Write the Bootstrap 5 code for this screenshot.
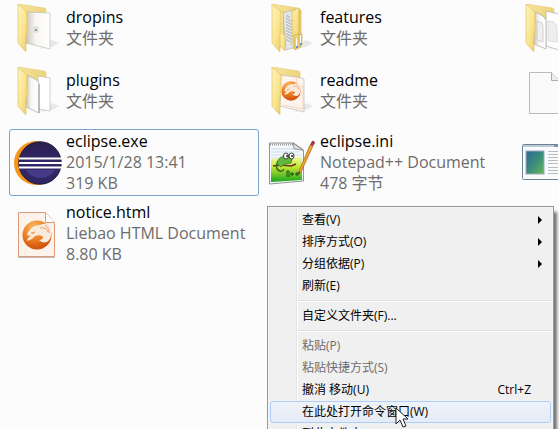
<!DOCTYPE html>
<html lang="zh-CN">
<head>
<meta charset="utf-8">
<meta name="viewport" content="width=device-width, initial-scale=1">
<title>eclipse</title>
<link href="https://cdn.jsdelivr.net/npm/bootstrap@5.3.0/dist/css/bootstrap.min.css" rel="stylesheet">
<style>
body{background:#fcfcfc;color:#000;font-family:"Open Sans","Noto Sans CJK SC",sans-serif;font-size:16px;line-height:21px;height:100vh;overflow:hidden}
.files{display:grid;grid-template-columns:250px 250px minmax(0,250px);column-gap:4px;align-items:start;padding-left:9px;overflow:hidden}
.file{height:56px;margin-bottom:7px;gap:1px;padding-left:4px;border:1px solid transparent;border-radius:3px;white-space:nowrap;overflow:hidden}
.file.tall{height:67px;margin:3px 0 1px}
.file.focused{border-color:#7da2ce}
.file svg{width:48px;height:48px;flex:none}
.file .labels{padding-left:3px}
.meta{color:#6d6d6d}
.ctx{left:267px;top:206px;width:287px;background:#f0f0f0 linear-gradient(90deg,transparent 28px,#e2e3e3 28px,#e2e3e3 29px,#fff 29px,#fff 30px,transparent 30px);border:1px solid #979797;padding:2px;box-shadow:inset 0 0 0 1px #f5f5f5,4px 5px 3px -1px rgba(0,0,0,.55);font-size:12px;line-height:20px}
.entry{display:flex;justify-content:space-between;align-items:center;width:100%;height:22px;padding:0 19px 0 31px;border:1px solid transparent;border-radius:3px;background:none;color:#000;text-align:left;white-space:nowrap}
.entry:disabled{color:#6d6d6d}
.entry.sub{padding-right:8px}
.entry.hot{border-color:#aecff7;background:linear-gradient(#eff3f9,#e4ebf6)}
.rule{margin:3px 0 3px 28px;height:2px;border-top:1px solid #e0e0e0;background:#fff}
.pointer{left:395px;top:407px;width:13px;height:21px;z-index:5}
</style>
</head>
<body>
<svg class="position-absolute" width="0" height="0" aria-hidden="true">
<defs>
<linearGradient id="back" x2="1" y2="1"><stop stop-color="#f6e59f"/><stop offset="1" stop-color="#e8c75f"/></linearGradient>
<linearGradient id="front" x2="1" y2="1"><stop stop-color="#fdf2bd"/><stop offset=".5" stop-color="#fbe794"/><stop offset="1" stop-color="#edcd6b"/></linearGradient>
<linearGradient id="sheet" x2="1" y2="0"><stop stop-color="#cfc5b4"/><stop offset=".4" stop-color="#f7f6f4"/><stop offset="1" stop-color="#fff"/></linearGradient>
<radialGradient id="ball" cx=".4" cy=".25" r=".8"><stop stop-color="#fbc069"/><stop offset=".5" stop-color="#ee7f22"/><stop offset="1" stop-color="#c94a08"/></radialGradient>
<linearGradient id="green" x2="0" y2="1"><stop stop-color="#f4f7a0"/><stop offset=".4" stop-color="#c5e532"/><stop offset="1" stop-color="#17a51c"/></linearGradient>
<linearGradient id="teal" x2="1" y2="1"><stop stop-color="#2d6796"/><stop offset=".5" stop-color="#398c7d"/><stop offset="1" stop-color="#68b957"/></linearGradient>
<linearGradient id="night" x2="0" y2="1"><stop stop-color="#2b1f50"/><stop offset=".6" stop-color="#33286a"/><stop offset="1" stop-color="#2f2560"/></linearGradient>
</defs>
<symbol id="leopard" viewBox="0 0 30 30"><circle cx="15" cy="15" r="14.500" fill="url(#ball)"/><path d="M5 15C7 9 12 5 18 5c4-2 8-2 10 2 3 6 1 12-3 15-3 1-6 0-8-2 2 0 4-1 4-3-2-2-5-2-8-1l-3 3-5 2 1-3 3-2z" fill="#f9eadc"/><path d="M9 13l4-1-2 2zM18 8c4-1 7 1 8 4M23 5c3 2 4 5 4 8" fill="none" stroke="#e7a56e"/></symbol>
<symbol id="folderback" viewBox="0 0 48 48"><path d="M26 45l12-2 7-4-7-3z" fill="#000" opacity=".08"/><path d="M4 0l26 4q2 0 2 2v34l-20-1z" fill="url(#back)" stroke="#e5cd7d" stroke-width=".7"/></symbol>
<symbol id="folderfront" viewBox="0 0 48 48"><path d="M4 0l9 8v21l-1 2v16q0 1-1 0L4 39z" fill="url(#front)" stroke="#dfc468" stroke-width=".7"/></symbol>
</svg>

<main class="files">
<div class="file d-flex align-items-center">
<svg viewBox="0 0 48 48"><use href="#folderback"/><path d="M13 8l23 1v36l-24-6z" fill="url(#sheet)" stroke="#bbb" stroke-width=".7"/><rect x="20" y="23" width="4" height="5" fill="#eee" stroke="#bbb" stroke-width=".5"/><path d="M21 25h2v2h-2z" fill="#999"/><use href="#folderfront"/></svg>
<div class="labels"><div>dropins</div><div class="meta">文件夹</div></div></div>
<div class="file d-flex align-items-center">
<svg viewBox="0 0 48 48"><use href="#folderback"/><path d="M15 9l13-4v38l-10 3z" fill="#e4e7e8" stroke="#aaa" stroke-width=".6"/><path d="M19 11v26m2-25v27m2-23v25" stroke="#999" stroke-width=".8" stroke-dasharray="2 1"/><path d="M10 6l5 3v21l2 2v15l-5-5zM24 7l7-3v38l-6 3z" fill="url(#front)" stroke="#d6b958" stroke-width=".6"/><path d="M26 31l5-1V7l2-1v37l-6 3zM31 30h3v11l-3 1z" fill="#efd16e" stroke="#caa84a" stroke-width=".6"/><path d="M28 34h1v9h-1zM32 31h1v9h-1z" fill="#fff"/><path d="M28 42h2v2h-2zM32 39h2v2h-2z" fill="#4d9de0"/><use href="#folderfront"/></svg>
<div class="labels"><div>features</div><div class="meta">文件夹</div></div></div>
<div class="file d-flex align-items-center">
<svg viewBox="0 0 48 48"><use href="#folderback"/><path d="M24 7l13 3v36l-13-4z" fill="#fff" stroke="#aaa" stroke-width=".7"/><path d="M26 17l6 1 3 4v16l-9-1z" fill="#eee" stroke="#ccc" stroke-width=".6"/><path d="M13 8l8 4 3 4v29l-12-5z" fill="url(#sheet)" stroke="#aaa" stroke-width=".7"/><path d="M15 17l5 2 1 4v15l-6-2z" fill="#eee" stroke="#bbb" stroke-width=".6"/><use href="#folderfront"/></svg>
</div>

<div class="file d-flex align-items-center">
<svg viewBox="0 0 48 48"><use href="#folderback"/><path d="M24 9l12 2v33l-12-2z" fill="#fff" stroke="#bbb" stroke-width=".7"/><path d="M13 8l8 4q4 2 4 5v29l-13-6z" fill="url(#sheet)" stroke="#aaa" stroke-width=".7"/><path d="M25 17v29" stroke="#999"/><use href="#folderfront"/></svg>
<div class="labels"><div>plugins</div><div class="meta">文件夹</div></div></div>
<div class="file d-flex align-items-center">
<svg viewBox="0 0 48 48"><use href="#folderback"/><path d="M13 8l16 2 7 2v33l-24-6z" fill="#fdf4ee" stroke="#bbb" stroke-width=".7"/><path d="M28 10l1 8 6 2M35 20v22l-20-4" fill="none" stroke="#f0c7a8" stroke-width=".7"/><use href="#leopard" x="13" y="14" width="20" height="20"/><use href="#folderfront"/></svg>
<div class="labels"><div>readme</div><div class="meta">文件夹</div></div></div>
<div class="file d-flex align-items-center">
<svg viewBox="0 0 48 48"><path d="M7.500 5.500h22l8 8v33h-30z" fill="#fafafa" stroke="#bbb"/><path d="M29.500 5.500v8h8" fill="#eee" stroke="#aaa"/></svg>
</div>

<div class="file tall focused d-flex align-items-center">
<svg viewBox="0 0 48 48"><path d="M22 2A22 22 0 0 0 22 46L29 45A21 21 0 0 1 28 3z" fill="#f7941e"/><circle cx="26" cy="24" r="21.300" fill="url(#night)" stroke="#181329" stroke-width=".8"/><path d="M12 31h29q-5 8-14.500 8T12 31z" fill="#51479b" opacity=".6"/><path d="M5 19.500h43M5 24h43M5 28.500h43" stroke="#fff" stroke-width="2.200"/></svg>
<div class="labels"><div>eclipse.exe</div><div class="meta">2015/1/28 13:41</div><div class="meta">319 KB</div></div></div>
<div class="file tall d-flex align-items-center">
<svg viewBox="0 0 48 48"><path d="M1.500 4h24l10 7v31l-34 3z" fill="#f5f8fa" stroke="#888" stroke-width=".9"/><path d="M2 5.500h24" stroke="#999" stroke-width="2" stroke-dasharray="1 1"/><path d="M3 10h23M3 13h28M3 16h30M3 19h30" stroke="#bfd4df" stroke-width=".8"/><path d="M25 4l1 6 9 1z" fill="#ddd" stroke="#777" stroke-width=".7"/><path d="M3 20l31-2v23L3 43z" fill="url(#green)"/><path d="M5 27l8-1 10 1 5-2" stroke="#613621" stroke-width="1.500" fill="none"/><path d="M10 22q-3 6 0 9 4 3 6-1" fill="none" stroke="#366b22" stroke-width="1.600"/><path d="M9 25q1-8 9-8l6 3-1 4-6 1-4 3z" fill="#63b83c" stroke="#366b22" stroke-width=".7"/><ellipse cx="18" cy="17" rx="2.500" ry="3" fill="#fff" stroke="#111" stroke-width=".8"/><ellipse cx="23.500" cy="17" rx="2.500" ry="3" fill="#fff" stroke="#111" stroke-width=".8"/><path d="M19 16v2m5-2v2" stroke="#000" stroke-width="1.300"/><path d="M19 38v-6h2v6m1-3h4m-2-2v4m3-2h4m-2-2v4" stroke="#184c18" fill="none"/><path d="M31 32L42 6l3 1-12 26-3 3z" fill="#f1a22d" stroke="#9a5a18" stroke-width=".6"/><path d="M42 6l2-4q2-1 3 2l-2 3z" fill="#9d3840"/><path d="M30 36l1-4 1 2z" fill="#333"/></svg>
<div class="labels"><div>eclipse.ini</div><div class="meta">Notepad++ Document</div><div class="meta">478 字节</div></div></div>
<div class="file tall d-flex align-items-center">
<svg viewBox="0 0 48 48"><rect x=".5" y="5.500" width="47" height="35" rx="1" fill="#f8fafb" stroke="#6f8292"/><path d="M1 6h46v2H1z" fill="#b9cbd9"/><path d="M32 7h14" stroke="#3c5d85" stroke-dasharray="4 1"/><rect x="4" y="12" width="18" height="23" fill="url(#teal)" stroke="#9ab"/><path d="M26 12.500h16M26 15.500h16M26 18.500h16M26 21.500h16M26 24.500h16M26 28.500h16M26 31.500h16M26 34.500h16" stroke="#bbb"/></svg>
</div>

<div class="file tall d-flex align-items-center">
<svg viewBox="0 0 48 48"><path d="M4 47.500h37" stroke="#bbb"/><path d="M4.500 2.500h27l9 10v34h-36z" fill="#fdf3eb" stroke="#dc9b76"/><path d="M31.500 2.500v10h9" fill="#fff" stroke="#dc9b76"/><use href="#leopard" x="8" y="10" width="30" height="30"/></svg>
<div class="labels"><div>notice.html</div><div class="meta">Liebao HTML Document</div><div class="meta">8.80 KB</div></div></div>
</main>

<div class="ctx position-absolute" role="menu">
<button class="entry sub" role="menuitem">查看(V)<svg width="4" height="8"><path d="M0 0l4 4-4 4z"/></svg></button>
<button class="entry sub" role="menuitem">排序方式(O)<svg width="4" height="8"><path d="M0 0l4 4-4 4z"/></svg></button>
<button class="entry sub" role="menuitem">分组依据(P)<svg width="4" height="8"><path d="M0 0l4 4-4 4z"/></svg></button>
<button class="entry" role="menuitem">刷新(E)</button>
<div class="rule" role="separator"></div>
<button class="entry" role="menuitem">自定义文件夹(F)...</button>
<div class="rule" role="separator"></div>
<button class="entry" role="menuitem" disabled>粘贴(P)</button>
<button class="entry" role="menuitem" disabled>粘贴快捷方式(S)</button>
<button class="entry" role="menuitem">撤消 移动(U)<span>Ctrl+Z</span></button>
<button class="entry hot" role="menuitem">在此处打开命令窗口(W)</button>
<button class="entry" role="menuitem">到此文件夹</button>
</div>
<svg class="pointer position-absolute" viewBox="0 0 13 21" aria-hidden="true"><path d="M1 1v16l4-4 3 7 3-1-3-7h5z" fill="#fff" stroke="#222"/></svg>
<script src="https://cdn.jsdelivr.net/npm/bootstrap@5.3.0/dist/js/bootstrap.bundle.min.js"></script>
</body>
</html>
